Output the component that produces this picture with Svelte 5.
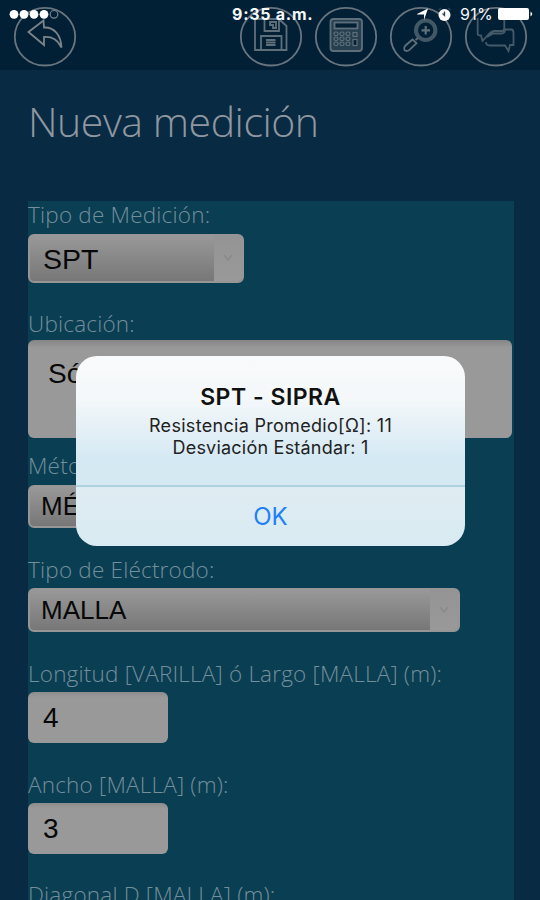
<script>
  const fields = [
    { label: 'Tipo de Medición:', kind: 'select', value: 'SPT', cls: 'type' },
    { label: 'Ubicación:', kind: 'area', value: 'Sótano', cls: 'place' },
    { label: 'Método:', kind: 'select', value: 'MÉTODO', cls: 'method' },
    { label: 'Tipo de Eléctrodo:', kind: 'select', value: 'MALLA', cls: 'rod' },
    { label: 'Longitud [VARILLA] ó Largo [MALLA] (m):', kind: 'input', value: '4', cls: 'len' },
    { label: 'Ancho [MALLA] (m):', kind: 'input', value: '3', cls: 'wid' },
    { label: 'Diagonal D [MALLA] (m):', kind: 'none', value: '', cls: 'diag' }
  ];
</script>

{#snippet ring()}
  <ellipse cx="32" cy="31.700" rx="30.200" ry="28.800" />
{/snippet}

<div class="screen">
  <header>
    <svg class="ic" viewBox="0 0 64 64">{@render ring()}<path d="M15.500 27L30.500 15.500L31 22.500C42 22 48 31 48.500 42.500C44.500 35 40 31.500 31 32V40Z" /></svg>
    <div class="tools">
      <svg class="ic" viewBox="0 0 64 64">{@render ring()}<path d="M16 14H40L47.500 21V45H16ZM25.500 14V26H40V14M31 17H37V23H34V20H31ZM22 45V31H42.500V45M27 35H36.500M27 37.500H36.500M27 40H36.500" /></svg>
      <svg class="ic" viewBox="0 0 64 64">{@render ring()}<rect class="body" x="16.500" y="14" width="31.500" height="32" rx="3" /><rect class="lcd" x="20.500" y="17.500" width="23" height="6" />
        <g class="keys">
          {#each [0, 1, 2] as r}{#each [0, 1, 2] as c}<rect x={20 + c * 6} y={27 + r * 5} width="4" height="3.500" rx="1.500" />{/each}{/each}
          <rect x="39" y="27.500" width="4" height="4" /><rect class="lcd" x="39" y="34.500" width="4" height="6" />
        </g></svg>
      <svg class="ic" viewBox="0 0 64 64">{@render ring()}<circle class="lens" cx="36.700" cy="25.300" r="9.700" /><path d="M32.500 25.300H41M36.700 21V29.500" stroke-width="2.200" /><path d="M29 33L26.500 35M23.500 34.500L27.500 38.200L20 45.300Q16.500 47 15.300 44.500Q14.500 42.500 16.500 40.500Z" /></svg>
      <svg class="ic chat" viewBox="0 0 64 64">{@render ring()}<path d="M13.700 13V29Q13.700 30.500 17 30.500L18.500 36L23 31Q27 26.500 30 26H38Q40.300 26 40.300 23V13M23 32L29 28.500H37Q41 28.500 41 24.500H47Q49.500 24.500 49.500 28V40H46L44.500 46L41 40.500H26Q22 40.500 22 37" /></svg>
    </div>
    <div class="status">
      <svg class="dots" width="54" height="18" viewBox="0 0 54 18"><g fill="#fff"><circle cx="5" cy="9.300" r="4.400" /><circle cx="15" cy="9.300" r="4.400" /><circle cx="25" cy="9.300" r="4.400" /><circle cx="35" cy="9.300" r="4.400" /></g><circle cx="45" cy="9.300" r="3.800" fill="none" stroke="#79838b" stroke-width="1.200" /></svg>
      <span class="time">9:35 a.m.</span>
      <div class="right">
        <svg width="36" height="18" viewBox="0 0 36 18"><path d="M-1 9.500L11 3.500L7 15V9.500Z" fill="#fff" /><circle cx="27.500" cy="10" r="6" fill="#fff" /><path d="M27.500 6.500V10.500L25.500 8.500M21.500 5L24 3M33.500 5L31 3" stroke="#25445a" stroke-width="1.300" fill="none" /></svg>
        <span class="pct">91%</span>
        <svg width="36" height="18" viewBox="0 0 36 18"><rect x="0" y="3" width="31" height="12" rx="2" fill="#fff" /><path d="M32.500 6.500Q36 9 32.500 11.500Z" fill="#fff" /></svg>
      </div>
    </div>
  </header>
  <h1>Nueva medición</h1>
  <form>
    {#each fields as f}
      <div class="field {f.cls}">
        <label for={f.cls}>{f.label}</label>
        {#if f.kind !== 'none'}
          <div id={f.cls} class="control {f.kind}">
            <span>{f.value}</span>
            {#if f.kind === 'select'}
              <i><svg width="12" height="10" viewBox="0 0 12 10"><path d="M2 2L6 7L10 2" fill="none" stroke="#888b8c" stroke-width="1.500" /></svg></i>
            {/if}
          </div>
        {/if}
      </div>
    {/each}
  </form>
  <div class="alert" role="alertdialog">
    <div class="msg">
      <strong>SPT - SIPRA</strong>
      <p class="p1">Resistencia Promedio[Ω]: 11</p>
      <p class="p2">Desviación Estándar: 1</p>
    </div>
    <button>OK</button>
  </div>
</div>

<style>
  :global(body) { background: #082b43; }
  .screen { position: relative; width: 540px; height: 900px; overflow: hidden; background: #082b43; font-family: "Open Sans", sans-serif; box-sizing: border-box; }
  header { position: relative; height: 70px; background: #022035; box-sizing: border-box; padding: 5px 12px 0 13px; display: flex; justify-content: space-between; align-items: flex-start; }
  .ic { width: 64px; height: 64px; fill: none; stroke: #5f6f7a; stroke-width: 1.8; display: block; }
  header > .ic { stroke: #7c8388; }
  .tools { display: flex; gap: 11px; }
  .ic ellipse { stroke: #68757e; }
  .chat path { stroke: #455a69; }
  .body { fill: #263f50; }
  .lcd { fill: #022035; }
  .lens { stroke: #435866; stroke-width: 4; }
  .keys { stroke-width: 1.2; }
  .status { position: absolute; left: 0; top: 5px; width: 540px; height: 18px; padding: 0 6px 0 9px; box-sizing: border-box; display: flex; justify-content: space-between; align-items: center; color: #f5f7f8; font-family: Inter, "Liberation Sans", sans-serif; }
  .status svg { display: block; }
  .time { position: absolute; left: 232px; font-size: 16px; font-weight: 700; letter-spacing: .75px; line-height: 19px; }
  .right { display: flex; align-items: center; }
  .pct { width: 36px; margin: 0 2px 0 7px; font-size: 16px; line-height: 18px; letter-spacing: .3px; }
  h1 { margin: 0; padding: 20px 0 0 28px; height: 131px; box-sizing: border-box; color: #9197a0; font-size: 41px; font-weight: 300; line-height: 63px; letter-spacing: -.45px; white-space: nowrap; }
  form { width: 486px; height: 699px; margin-left: 28px; background: #0a3e52; }
  .field { display: flex; flex-direction: column; }
  label { height: 32px; flex: none; line-height: 28px; font-size: 22.500px; font-weight: 300; letter-spacing: .2px; color: #748e9b; white-space: nowrap; }
  .control { box-sizing: border-box; display: flex; border-radius: 6px; color: #080808; font-family: "Liberation Sans", Arial, sans-serif; overflow: hidden; background: #999; }
  .select { border: 2px solid #969696; border-top-width: 1px; background: linear-gradient(#999, #777); font-size: 26px; padding-left: 11px; justify-content: space-between; align-items: center; }
  .select i { width: 28px; height: 100%; background: linear-gradient(#949494, #999); display: flex; align-items: center; justify-content: center; }
  .type { height: 109px; } .type label { height: 33px; } .type .control { width: 216px; height: 49px; font-size: 28.500px; padding-left: 13px; }
  .type .control span { padding-top: 2px; }
  .place { height: 142px; } .place label { height: 30px; }
  .area { width: 484px; height: 98px; padding: 14px 0 0 20px; font-size: 28px; line-height: 39px; background: linear-gradient(#858585, #999 8px); }
  .method { height: 104px; } .method label { height: 33px; } .method .control { width: 432px; height: 43px; }
  .rod { height: 104px; } .rod .control { width: 432px; height: 44px; }
  .rod .control span { padding-top: 1px; }
  .len { height: 111px; } .wid { height: 110px; }
  .input { width: 140px; height: 51px; padding-left: 15px; font-size: 28px; line-height: 51px; background: linear-gradient(#8c8c8c, #999 5px); }
  .alert { position: absolute; left: 76px; top: 356px; width: 389px; height: 190px; border-radius: 21px; overflow: hidden; display: flex; flex-direction: column; background: linear-gradient(#f9fafb 0, #f4f8fa 42px, #e7f1f7 68px, #d4e9f3 104px, #d5e9f2 130px, #dfedf2 132px, #d9eaf2 100%); color: #111; font-family: Inter, "Liberation Sans", sans-serif; text-align: center; }
  .msg { height: 129px; padding-top: 26px; box-sizing: border-box; }
  .alert strong { display: block; font-size: 23px; font-weight: 600; line-height: 30px; letter-spacing: .5px; }
  p { margin: 0; font-size: 18px; line-height: 22px; letter-spacing: .3px; color: #222; white-space: nowrap; padding-top: 3px; }
  .p2 { padding-top: 0; letter-spacing: .22px; }
  button { height: 61px; padding: 0; border: 0; border-top: 2px solid #b0d1e0; background: transparent; color: #2080fa; font: 400 24px/59px Inter, "Liberation Sans", sans-serif; }
</style>
